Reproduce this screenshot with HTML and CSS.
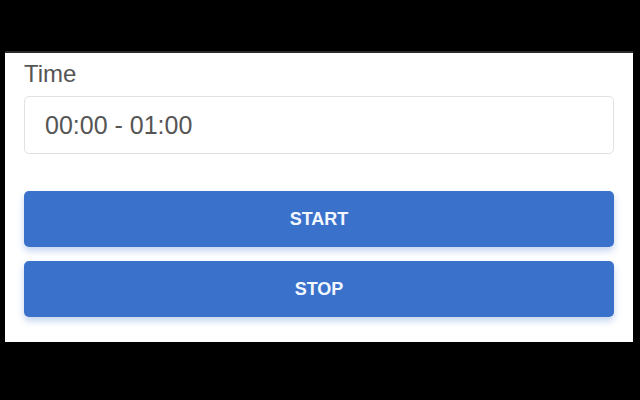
FILE: index.html
```html
<!DOCTYPE html>
<html>
<head>
<meta charset="utf-8">
<link rel="stylesheet" href="styles.css">
</head>
<body>
<div class="screen">
  <div class="panel">
    <label class="label">Time</label>
    <div class="input">00:00 - 01:00</div>
    <div class="buttons">
      <button class="btn">START</button>
      <button class="btn">STOP</button>
    </div>
  </div>
</div>
</body>
</html>
```
FILE: styles.css
```css
html, body {
  margin: 0;
  padding: 0;
  background: #000;
  width: 640px;
  height: 400px;
  overflow: hidden;
  font-family: "Liberation Sans", Arial, sans-serif;
}
.screen {
  padding-top: 51px;
  padding-left: 5px;
}
.panel {
  box-sizing: border-box;
  width: 628px;
  height: 291px;
  background: #fff;
  border-top: 2px solid #2a2a2a;
  padding: 7px 19px 0 19px;
  display: flex;
  flex-direction: column;
}
.label {
  display: block;
  font-size: 24px;
  line-height: 28px;
  color: #555;
}
.input {
  box-sizing: border-box;
  margin-top: 8px;
  height: 58px;
  width: 590px;
  border: 1px solid #e2e2e2;
  border-radius: 5px;
  padding-left: 20px;
  display: flex;
  align-items: center;
  font-size: 25px;
  color: #555;
}
.buttons {
  margin-top: 37px;
  display: flex;
  flex-direction: column;
  gap: 14px;
}
.btn {
  width: 590px;
  height: 56px;
  border: none;
  border-radius: 5px;
  background: #3a72cb;
  color: #f2f7ff;
  font-family: "Liberation Sans", Arial, sans-serif;
  font-weight: 700;
  font-size: 18px;
  padding: 0;
  box-shadow: 0 4px 7px rgba(58, 114, 203, 0.3);
}
```
